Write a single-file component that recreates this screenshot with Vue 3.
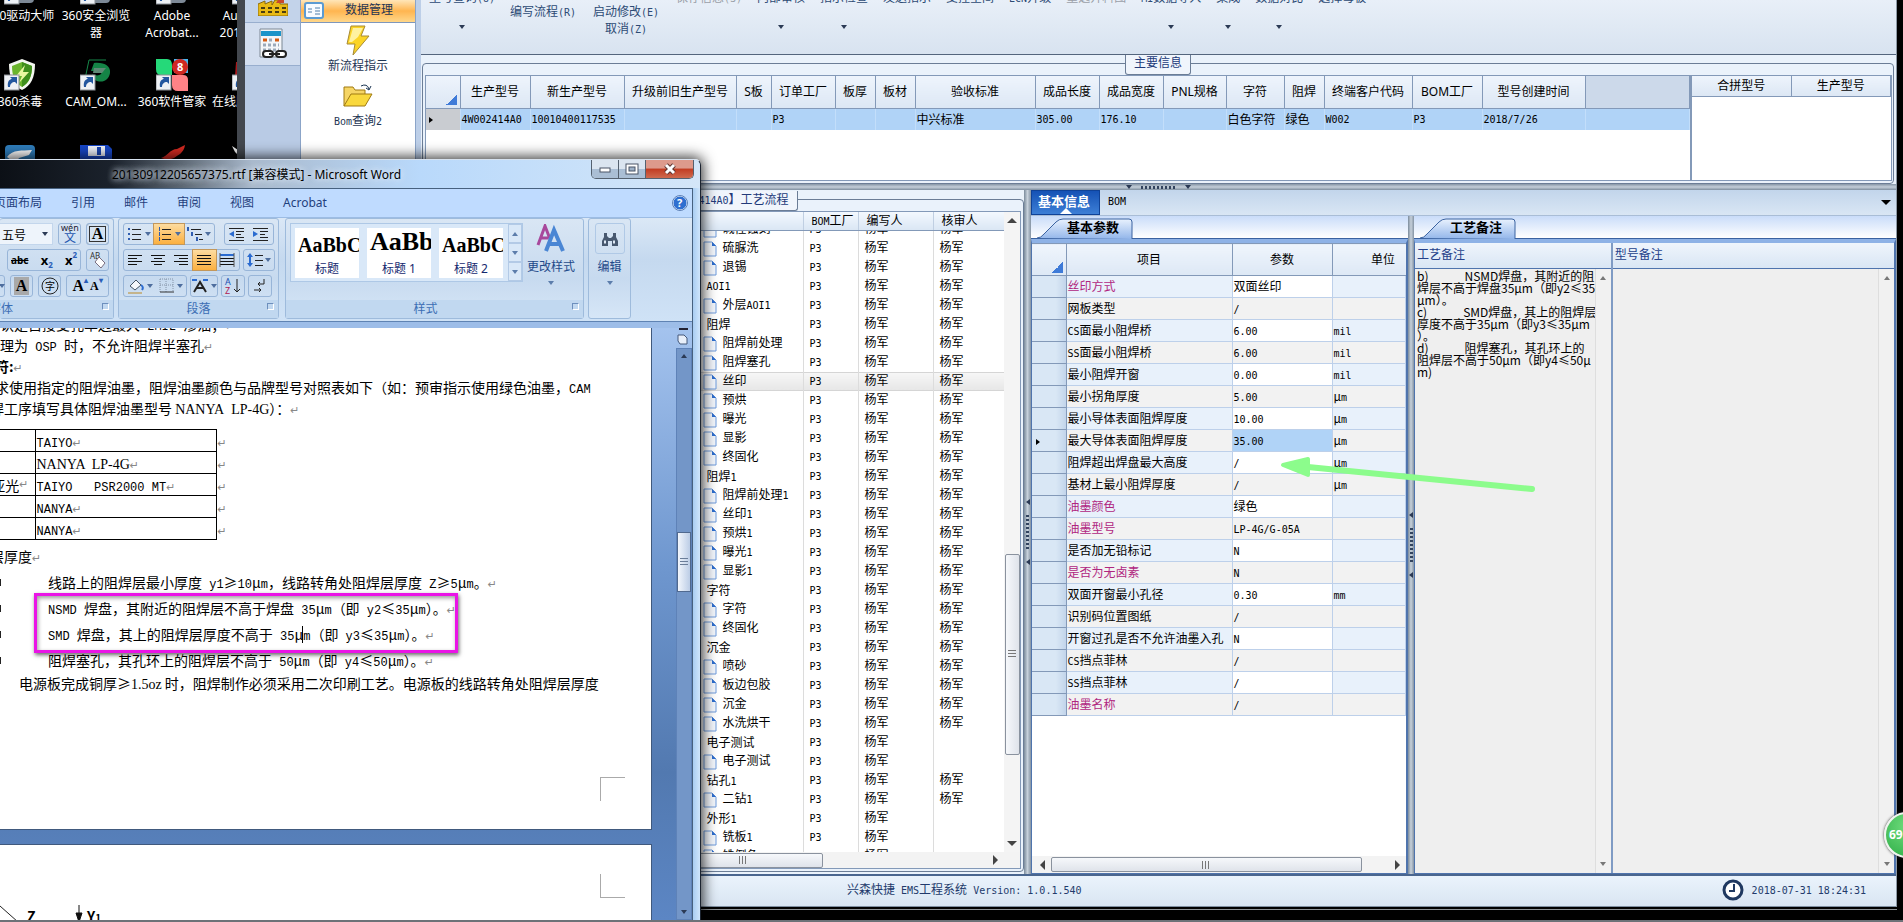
<script setup>
import { h, ref } from "vue";

// latin runs get the half width face, everything else stays full width
const Mixed = (props) =>
  props.text
    .split(/([ -~]+)/)
    .filter(Boolean)
    .map((s) => h("span", { class: /^[ -~]/.test(s) ? "hw" : "fw" }, s));
Mixed.props = ["text"];

const desktopIcons = [
  { kind: "drive", label: "360驱动大师" },
  { kind: "drive", label: "360安全浏览器" },
  { kind: "drive", label: "Adobe Acrobat..." },
  { kind: "drive", label: "AutoCAD 2010 - Si..." },
  { kind: "shield", label: "360杀毒" },
  { kind: "cam", label: "CAM_OM..." },
  { kind: "soft", label: "360软件管家" },
  { kind: "red", label: "在线服务系统" },
  { kind: "plane", label: "" },
  { kind: "disk", label: "" },
  { kind: "swift", label: "" },
  { kind: "white", label: "" },
];

const commands = [
  { lines: ["型号查询(U)"], arrow: true, wide: true },
  { lines: ["", "编写流程(R)"], wide: true, gap: true },
  { lines: ["", "启动修改(E)", "取消(Z)"], wide: true, gap: true },
  { lines: ["保存信息(S)"], off: true, wide: true },
  { lines: ["内部审核"], arrow: true },
  { lines: ["指示检查"], arrow: true },
  { lines: ["发送指示"] },
  { lines: ["受控空间"] },
  { lines: ["ECN升级"] },
  { lines: ["重选开料图"], off: true },
  { lines: ["MI数据导入"], arrow: true },
  { lines: ["集成"], arrow: true },
  { lines: ["数据对比"], arrow: true },
  { lines: ["选择母板"] },
];

const mainCols = [
  { t: "生产型号", v: "4W002414A0", w: 70 },
  { t: "新生产型号", v: "10010400117535", w: 94 },
  { t: "升级前旧生产型号", v: "", w: 112 },
  { t: "S板", v: "", w: 35 },
  { t: "订单工厂", v: "P3", w: 64 },
  { t: "板厚", v: "", w: 40 },
  { t: "板材", v: "", w: 40 },
  { t: "验收标准", v: "中兴标准", w: 120 },
  { t: "成品长度", v: "305.00", w: 64 },
  { t: "成品宽度", v: "176.10", w: 64 },
  { t: "PNL规格", v: "", w: 63 },
  { t: "字符", v: "白色字符", w: 58 },
  { t: "阻焊", v: "绿色", w: 40 },
  { t: "终端客户代码", v: "W002", w: 88 },
  { t: "BOM工厂", v: "P3", w: 70 },
  { t: "型号创建时间", v: "2018/7/26", w: 103 },
];

// names starting with # are the group rows
const steps = (
  "碱性蚀刻 硫脲洗 退锡 #AOI1 外层AOI1 #阻焊 阻焊前处理 阻焊塞孔 丝印 预烘 曝光 显影 终固化 " +
  "#阻焊1 阻焊前处理1 丝印1 预烘1 曝光1 显影1 #字符 字符 终固化 #沉金 喷砂 板边包胶 沉金 水洗烘干 " +
  "#电子测试 电子测试 #钻孔1 二钻1 #外形1 铣板1 铣倒角1"
)
  .split(" ")
  .map((s, i) => ({
    id: i,
    group: s[0] === "#",
    name: s.replace("#", ""),
    checker: [27, 28, 31, 32, 33].includes(i) ? "" : "杨军",
  }));
const activeStep = ref(8);

const params = [
  ["丝印方式", "双面丝印", "", 1],
  ["网板类型", "/", ""],
  ["CS面最小阻焊桥", "6.00", "mil"],
  ["SS面最小阻焊桥", "6.00", "mil"],
  ["最小阻焊开窗", "0.00", "mil"],
  ["最小拐角厚度", "5.00", "μm"],
  ["最小导体表面阻焊厚度", "10.00", "μm"],
  ["最大导体表面阻焊厚度", "35.00", "μm"],
  ["阻焊超出焊盘最大高度", "/", "μm"],
  ["基材上最小阻焊厚度", "/", "μm"],
  ["油墨颜色", "绿色", "", 1],
  ["油墨型号", "LP-4G/G-05A", "", 1],
  ["是否加无铅标记", "N", ""],
  ["是否为无卤素", "N", "", 1],
  ["双面开窗最小孔径", "0.30", "mm"],
  ["识别码位置图纸", "/", ""],
  ["开窗过孔是否不允许油墨入孔", "N", ""],
  ["CS挡点菲林", "/", ""],
  ["SS挡点菲林", "/", ""],
  ["油墨名称", "/", "", 1],
];
const activeParam = ref(7);

const remark = ref(
  [
    "b)　　　NSMD焊盘，其附近的阻",
    "焊层不高于焊盘35μm（即y2≤35",
    "μm）。",
    "c)　　　SMD焊盘，其上的阻焊层",
    "厚度不高于35μm（即y3≤35μm",
    "）。",
    "d)　　　阻焊塞孔，其孔环上的",
    "阻焊层不高于50μm（即y4≤50μ",
    "m)",
  ].join("\n")
);
const modelRemark = ref("");

const bullets = [
  "线路上的阻焊层最小厚度 y1≥10μm，线路转角处阻焊层厚度 Z≥5μm。",
  "NSMD 焊盘，其附近的阻焊层不高于焊盘 35μm（即 y2≤35μm）。",
  "SMD 焊盘，其上的阻焊层厚度不高于 35μm（即 y3≤35μm）。",
  "阻焊塞孔，其孔环上的阻焊层不高于 50μm（即 y4≤50μm）。",
];
const inks = [
  ["", "TAIYO"],
  ["", "NANYA  LP-4G"],
  ["亚光", "TAIYO   PSR2000 MT"],
  ["", "NANYA"],
  ["", "NANYA"],
];
const wordTabs = ["页面布局", "引用", "邮件", "审阅", "视图", "Acrobat"];
const styleCards = [
  { s: "AaBbC", t: "标题" },
  { s: "AaBb", t: "标题 1", big: true },
  { s: "AaBbC", t: "标题 2" },
];
</script>

<template>
  <main class="desktop">
    <ul class="shortcuts">
      <li v-for="(d, i) in desktopIcons" :key="i">
        <svg width="32" height="32" viewBox="0 0 32 32">
          <g v-if="d.kind === 'drive'">
            <rect x="2" y="2" width="28" height="28" rx="4" fill="#7d8996" />
          </g>
          <g v-else-if="d.kind === 'shield'">
            <path d="M18 0 L31 5 C31 18 27 27 18 31 C9 27 5 18 5 5 Z" fill="#f4f7f0" />
            <path d="M18 3 L28 7 C28 17 25 24 18 28 C11 24 8 17 8 7 Z" fill="#6ab52c" />
            <path d="M18 3 L28 7 C28 17 25 24 18 28 Z" fill="#3f8f1c" />
            <path d="M21 6 L12 17 h6 L15 24 L25 13 h-6 Z" fill="#e9f8a0" />
          </g>
          <g v-else-if="d.kind === 'cam'">
            <path d="M26 1 H9 L5 20" fill="none" stroke="#17884a" stroke-width="1" />
            <path d="M14 4 C24 3 31 7 30 14 C29 21 22 25 15 21 L12 15 C18 18 22 16 22 12 H11 Z" fill="#148446" />
            <path d="M14 9 h12 l-4 5 h-9 z" fill="#5f8a76" />
          </g>
          <g v-else-if="d.kind === 'soft'">
            <path d="M0 0 H11 Q16 0 16 6 V16 H5 Q0 16 0 10 Z" fill="#25d979" />
            <path d="M18 0 h14 v14 h-14z" fill="#49b8f0" />
            <path d="M16 16 H27 Q32 16 32 21 V32 H22 Q16 32 16 26 Z" fill="#ff8286" />
            <circle cx="24" cy="8" r="8" fill="#cf2822" />
            <text x="21" y="12" font-size="11" font-weight="bold" fill="#fff">8</text>
          </g>
          <g v-else-if="d.kind === 'plane'">
            <rect x="1" width="30" height="30" rx="4" fill="#2f7dbb" />
            <path d="M3 12 C9 4 18 6 28 5 L25 10 L15 13 L13 16 L7 15 Z" fill="#fff" />
          </g>
          <g v-else-if="d.kind === 'disk'">
            <path d="M0 0 H28 L32 4 V32 H0 Z" fill="#1747c8" />
            <rect x="8" y="1" width="17" height="10" fill="#eef2fb" />
            <rect x="17" y="2" width="4" height="8" fill="#1b47b4" />
            <rect x="5" y="16" width="22" height="16" fill="#dbe3f4" />
          </g>
          <g v-else-if="d.kind === 'swift'">
            <path d="M29 0 L21 4 C14 4 12 11 5 13 L12 15 L18 13 C22 10 28 8 29 0 Z" fill="#d52b22" />
            <path d="M16 20 q6 -8 8 0 v10 h-8z" fill="#b9201a" />
          </g>
          <g v-else-if="d.kind === 'white'">
            <path d="M0 1 L6 5 V10 L3 7 Z" fill="#eee" />
          </g>
          <g v-else>
            <path d="M4 3 h28 v28 h-30 z" fill="#a8181c" />
          </g>
          <g v-if="!['swift', 'white'].includes(d.kind)">
            <rect x="0" y="16" width="15" height="15" fill="#eef1f5" stroke="#8b9096" />
            <path d="M4 28 C3 22 6 20 8 20 L6 18 H13 V25 L11 23 C8 23 6 25 6 28 Z" fill="#23579f" />
          </g>
        </svg>
        <span>{{ d.label }}</span>
      </li>
    </ul>

    <!-- EMS -->
    <section class="ems">
      <div class="ems-main">
        <aside class="rail">
          <button class="rail-first" aria-label="工厂">
            <svg width="30" height="16" viewBox="0 0 30 16">
              <path d="M0 16 V4 L7 1 V4 L14 1 V5 L17 0 H22 V4 H30 V16 Z" fill="#e9ba14" stroke="#8a6a0c" />
              <path d="M3 8 h4 M10 8 h4 M17 8 h4 M24 8 h4 M3 12 h4 M10 12 h4 M17 12 h4 M24 12 h4" stroke="#4b3d10" stroke-width="2" />
              <path d="M18 3 l2 -3 h6 v3z" fill="#c9482c" />
            </svg>
          </button>
          <button aria-label="日程">
            <svg width="30" height="32" viewBox="0 0 30 32">
              <path d="M2 1 h22 v28 h-22z" fill="#f4f6f9" stroke="#7c8894" />
              <path d="M3 3 h20 v5 h-20z" fill="#1c94c9" />
              <path d="M5 12 h4 M17 12 h4" stroke="#d55b12" stroke-width="3" />
              <path d="M11 12 h4 M5 17 h16 M5 22 h16" stroke="#9ba9ba" stroke-width="3" stroke-dasharray="3 2" />
              <rect x="5" y="23" width="10" height="6" rx="3" fill="#fff" stroke="#222" stroke-width="2" />
              <rect x="18" y="23" width="10" height="6" rx="3" fill="#fff" stroke="#222" stroke-width="2" />
              <path d="M11 26 h11" stroke="#222" stroke-width="2" />
            </svg>
          </button>
        </aside>

        <nav class="nav">
          <h2>
            <svg width="20" height="17" viewBox="0 0 20 17">
              <rect x="1" y="1" width="18" height="15" rx="2" fill="#f7fbff" stroke="#5c9bd2" stroke-width="2" />
              <path d="M4 7 h4 M4 10 h4 M11 6 h5 M11 9 h5 M11 12 h5" stroke="#4f7fab" />
            </svg>
            <span>数据管理</span>
          </h2>
          <a href="#">
            <svg width="24" height="32" viewBox="0 0 24 32">
              <path d="M5 1 H19 L15 11 H23 L7 30 L9 19 H1 Z" fill="#fcd425" stroke="#a68a36" />
              <path d="M7 3 H17 L12 12 L6 17 H3 Z" fill="#fff2a0" />
            </svg>
            <Mixed text="新流程指示" />
          </a>
          <a href="#" class="second">
            <svg width="30" height="24" viewBox="0 0 30 24">
              <path d="M1 22 V3 H10 L12 6 H22 V10" fill="#f6d565" stroke="#a07b13" />
              <path d="M1 22 L8 10 H29 L22 22 Z" fill="#f9d83d" stroke="#a07b13" />
              <path d="M18 2 q6 -3 8 3 m-3 -1 l3 2 l2 -4" fill="none" stroke="#17324f" />
            </svg>
            <span><Mixed text="Bom查询2" /></span>
          </a>
        </nav>

        <div class="work">
          <div class="ribbon">
            <button v-for="(c, i) in commands" :key="i" :class="{ off: c.off, gap: c.gap, wide: c.wide }">
              <span v-for="(l, k) in c.lines" :key="k" class="cmd-line"><Mixed :text="l" /></span>
              <i v-if="c.arrow" class="tri down"></i>
            </button>
          </div>

          <div class="group main-info">
            <h3 class="caption">主要信息</h3>
            <div class="grids">
              <div class="grid-wrap">
                <table class="main-table">
                  <thead>
                    <tr>
                      <th class="rowhead"><i class="corner"></i></th>
                      <th v-for="c in mainCols" :key="c.t" :style="{ width: c.w + 'px' }">{{ c.t }}</th>
                      <th class="rest"></th>
                    </tr>
                  </thead>
                  <tbody>
                    <tr>
                      <td class="rowhead"><i class="tri right"></i></td>
                      <td v-for="c in mainCols" :key="c.t"><Mixed :text="c.v" /></td>
                      <td></td>
                    </tr>
                  </tbody>
                </table>
              </div>
              <table class="panel-table">
                <thead>
                  <tr>
                    <th>合拼型号</th>
                    <th>生产型号</th>
                  </tr>
                </thead>
              </table>
            </div>
          </div>

          <div class="hsplit"><i class="tri down"></i><i class="dots"></i><i class="tri down"></i></div>

          <div class="lower">
            <div class="process">
              <div class="group">
                <h3 class="caption left"><Mixed text="【4W002414A0】工艺流程" /></h3>
                <div class="tree">
                  <div class="tree-cols">
                    <table class="tree-head">
                      <thead>
                        <tr>
                          <th></th>
                          <th class="c-name"></th>
                          <th class="c-bom"><Mixed text="BOM工厂" /></th>
                          <th class="c-writer">编写人</th>
                          <th class="c-check">核审人</th>
                        </tr>
                      </thead>
                    </table>
                    <div class="tree-body">
                      <table>
                        <tbody>
                          <tr v-for="s in steps" :key="s.id" :class="{ on: s.id === activeStep }" @click="activeStep = s.id">
                            <td></td>
                            <td class="c-name" :class="{ parent: s.group }">
                              <svg v-if="!s.group" width="14" height="16" viewBox="0 0 14 16">
                                <path d="M1 1 H9 L13 5 V15 H1 Z" fill="#f3f7fd" stroke="#6f9bdc" />
                                <path d="M9 1 V5 H13 Z" fill="#2e6fd0" />
                              </svg>
                              <Mixed :text="s.name" />
                            </td>
                            <td class="c-bom"><Mixed text="P3" /></td>
                            <td class="c-writer">杨军</td>
                            <td class="c-check">{{ s.checker }}</td>
                          </tr>
                        </tbody>
                      </table>
                    </div>
                  </div>
                  <div class="vbar"><i class="tri up"></i><b></b><i class="tri down"></i></div>
                </div>
                <div class="hbar process-h"><b></b><i class="tri right"></i></div>
              </div>
            </div>

            <div class="vsplit"><i class="tri lft"></i><i class="dots"></i><i class="tri lft"></i></div>

            <div class="detail">
              <div class="tabbar">
                <button class="active">基本信息<i></i></button>
                <button><Mixed text="BOM" /></button>
                <i class="tri down"></i>
              </div>
              <div class="panes">
                <div class="pane params">
                  <div class="strip">
                    <button>
                      <svg width="96" height="21" viewBox="0 0 96 21">
                        <defs>
                          <linearGradient id="tabfill" x1="0" y1="0" x2="0" y2="1">
                            <stop offset="0" stop-color="#e9f2fe" />
                            <stop offset="1" stop-color="#93b6ea" />
                          </linearGradient>
                        </defs>
                        <path d="M0 20 Q4 20 7 16 L19 4 Q22 1 26 1 H92 Q95 1 95 4 V21" fill="url(#tabfill)" stroke="#3a62a0" />
                      </svg>
                      <span>基本参数</span>
                    </button>
                  </div>
                  <div class="pane-body">
                    <table class="param-table">
                      <thead>
                        <tr>
                          <th class="rowhead"><i class="corner"></i></th>
                          <th class="p-item">项目</th>
                          <th class="p-value">参数</th>
                          <th class="p-unit">单位</th>
                        </tr>
                      </thead>
                      <tbody>
                        <tr v-for="(p, i) in params" :key="p[0]" @click="activeParam = i">
                          <td class="rowhead"><i v-if="i === activeParam" class="tri right"></i></td>
                          <td :class="{ must: p[3] }"><Mixed :text="p[0]" /></td>
                          <td class="val" :class="{ sel: i === activeParam }"><Mixed :text="p[1]" /></td>
                          <td><Mixed :text="p[2]" /></td>
                        </tr>
                      </tbody>
                    </table>
                    <div class="hbar"><i class="tri lft"></i><b></b><i class="tri right"></i></div>
                  </div>
                </div>

                <div class="vsplit slim"><i class="tri lft"></i><i class="dots"></i><i class="tri lft"></i></div>

                <div class="pane remarks">
                  <div class="strip">
                    <button>
                      <svg width="96" height="21" viewBox="0 0 96 21">
                        <path d="M0 20 Q4 20 7 16 L19 4 Q22 1 26 1 H92 Q95 1 95 4 V21" fill="url(#tabfill)" stroke="#3a62a0" />
                      </svg>
                      <span>工艺备注</span>
                    </button>
                  </div>
                  <div class="pane-body notes">
                    <div class="note craft">
                      <label for="craft">工艺备注</label>
                      <div class="note-box">
                        <textarea id="craft" v-model="remark" readonly></textarea>
                        <div class="mini"><i class="tri up"></i><i class="tri down"></i></div>
                      </div>
                    </div>
                    <div class="note">
                      <label for="model">型号备注</label>
                      <div class="note-box">
                        <textarea id="model" v-model="modelRemark" readonly></textarea>
                        <div class="mini"><i class="tri up"></i><i class="tri down"></i></div>
                      </div>
                    </div>
                  </div>
                </div>
              </div>
            </div>
          </div>
        </div>
      </div>
      <footer class="status">
        <span class="ver"><Mixed text="兴森快捷 EMS工程系统 Version: 1.0.1.540" /></span>
        <svg width="22" height="22" viewBox="0 0 22 22">
          <circle cx="11" cy="11" r="9" fill="#fff" stroke="#1f3860" stroke-width="3" />
          <path d="M12 5 V12 H7" fill="none" stroke="#1f3860" stroke-width="2" />
        </svg>
        <time><Mixed text="2018-07-31 18:24:31" /></time>
      </footer>
    </section>

    <!-- Word -->
    <section class="word">
      <header class="title">
        <h1>20130912205657375.rtf [兼容模式] - Microsoft Word</h1>
        <div class="winbtns">
          <button aria-label="最小化"><svg width="12" height="12"><rect x="1" y="5" width="10" height="4" fill="#fff" stroke="#4a5566" /></svg></button>
          <button aria-label="最大化"><svg width="14" height="12"><rect x="1" y="1" width="12" height="10" fill="#fff" stroke="#4a5566" /><rect x="4" y="4" width="6" height="4" fill="#9db0c6" stroke="#4a5566" /></svg></button>
          <button class="close" aria-label="关闭"><svg width="14" height="12"><path d="M3 2 L11 10 M11 2 L3 10" stroke="#5d3431" stroke-width="5" /><path d="M3 2 L11 10 M11 2 L3 10" stroke="#fff" stroke-width="3" /></svg></button>
        </div>
      </header>

      <div class="word-in">
        <nav class="wtabs">
          <button v-for="t in wordTabs" :key="t">{{ t }}</button>
          <svg class="help" width="16" height="16" viewBox="0 0 16 16">
            <circle cx="8" cy="8" r="7" fill="#2f6fd0" stroke="#e8f1ff" />
            <circle cx="8" cy="8" r="7.5" fill="none" stroke="#5b7fb5" />
            <text x="5" y="12" font-size="11" font-weight="bold" fill="#fff">?</text>
          </svg>
        </nav>

        <div class="wribbon">
          <div class="wgroup font">
            <div class="tools">
              <div class="trow">
                <span class="size"><select aria-label="字号"><option>五号</option></select><i class="tri down"></i></span>
                <button class="box"><svg width="20" height="20" viewBox="0 0 20 20"><text x="1" y="7" font-size="9" fill="#223">wén</text><text x="4" y="18" font-size="12" fill="#2456b0">文</text></svg></button>
                <button class="box letter framed">A</button>
              </div>
              <div class="trow">
                <span class="seg script"><button><s>abc</s></button><button>x<sub>2</sub></button><button>x<sup>2</sup></button></span>
                <button class="box">
                  <svg width="18" height="18"><text x="1" y="8" font-size="8" fill="#333">AB</text><path d="M6 11 L10 6 L16 12 L12 17 Z" fill="#fff" stroke="#7a6f80" /></svg>
                </button>
              </div>
              <div class="trow">
                <span class="seg tiny"><i class="tri down"></i></span>
                <button class="box letter shade"><span>A</span></button>
                <button class="box"><svg width="20" height="18"><circle cx="10" cy="9" r="8" fill="none" stroke="#222" /><text x="5" y="13" font-size="10">字</text></svg></button>
                <span class="seg grow"><button>A<sup>▴</sup></button><button class="sm">A<sup>▾</sup></button></span>
              </div>
            </div>
            <footer><span>字体</span><i class="launch"></i></footer>
          </div>

          <div class="wgroup para">
            <div class="tools">
              <div class="trow">
                <span class="seg">
                  <button><svg width="16" height="16"><path d="M1 3 h2 M1 8 h2 M1 13 h2" stroke="#2f5db0" stroke-width="2" /><path d="M5 3.5 h9 M5 8.5 h9 M5 13.5 h9" stroke="#222" /></svg><i class="tri down"></i></button>
                  <button class="hot"><svg width="16" height="16"><path d="M2.5 1 v4 M2.5 6 v4 M2.5 11 v4" stroke="#2f5db0" /><path d="M5 3.5 h9 M5 8.5 h9 M5 13.5 h9" stroke="#222" /></svg><i class="tri down"></i></button>
                  <button><svg width="16" height="16"><path d="M1 1 v4 M5 6 v4 M10 11 v4" stroke="#2f5db0" stroke-width="2" /><path d="M4 3.5 h10 M8 8.5 h7 M12 13.5 h4" stroke="#222" /></svg><i class="tri down"></i></button>
                </span>
                <span class="seg push">
                  <button><svg width="18" height="16"><path d="M1 2.5 h15 M8 5.5 h8 M8 8.5 h5 M8 11.5 h8 M1 14.5 h15" stroke="#222" /><path d="M6 5 L1 8 L6 11z" fill="#2b6bd0" /></svg></button>
                  <button><svg width="18" height="16"><path d="M1 2.5 h15 M8 5.5 h8 M8 8.5 h5 M8 11.5 h8 M1 14.5 h15" stroke="#222" /><path d="M1 5 L6 8 L1 11z" fill="#2b6bd0" /></svg></button>
                </span>
              </div>
              <div class="trow">
                <span class="seg align">
                  <button><svg width="16" height="14"><path d="M1 2.5 h14 M1 5.5 h9 M1 8.5 h14 M1 11.5 h9" stroke="#111" /></svg></button>
                  <button><svg width="16" height="14"><path d="M1 2.5 h14 M4 5.5 h8 M1 8.5 h14 M4 11.5 h8" stroke="#111" /></svg></button>
                  <button><svg width="16" height="14"><path d="M1 2.5 h14 M6 5.5 h9 M1 8.5 h14 M6 11.5 h9" stroke="#111" /></svg></button>
                  <button class="hot"><svg width="16" height="14"><path d="M1 2.5 h14 M1 5.5 h14 M1 8.5 h14 M1 11.5 h14" stroke="#111" /></svg></button>
                  <button><svg width="16" height="14"><path d="M1 5.5 h14 M1 8.5 h14 M1 11.5 h14" stroke="#111" /><path d="M1 2 h14" stroke="#2b6bd0" stroke-width="2" /><path d="M1 0 v14 M15 0 v14" stroke="#555" /></svg></button>
                </span>
                <button class="box lines"><svg width="16" height="16"><path d="M3 1 L6 5 H0z M3 15 L6 11 H0z M2 5 h2 v6 h-2z" fill="#2b6bd0" /><path d="M8 3.5 h8 M8 8.5 h8 M8 13.5 h8" stroke="#222" /></svg><i class="tri down"></i></button>
              </div>
              <div class="trow">
                <span class="seg">
                  <button><svg width="18" height="16"><path d="M3 8 L9 2 L14 7 L8 12z" fill="#f5f8fc" stroke="#456" /><path d="M14 7 q3 2 1 5" stroke="#2b6bd0" fill="none" stroke-width="2" /><path d="M1 15 h14" stroke="#c4b48c" stroke-width="2" /></svg><i class="tri down"></i></button>
                  <button><svg width="16" height="16"><path d="M1 1 h13 v13 M1 1 v13 M7 1 v13 M1 7 h13" fill="none" stroke="#8494a8" stroke-dasharray="1 1" /><path d="M1 14 h14" stroke="#333" /></svg><i class="tri down"></i></button>
                </span>
                <button class="box"><svg width="18" height="16"><path d="M3 14 L9 4 L15 14 M6 10 h6" fill="none" stroke="#222" stroke-width="2" /><path d="M1 2 h5 M12 2 h5" stroke="#2b6bd0" stroke-width="2" /></svg><i class="tri down"></i></button>
                <button class="box square"><svg width="18" height="18"><text x="1" y="8" font-size="9" fill="#2050b0">A</text><text x="1" y="17" font-size="9" fill="#b02050">Z</text><path d="M13 2 v13 M10 12 l3 3 l3 -3" fill="none" stroke="#222" /></svg></button>
                <button class="box square"><svg width="16" height="16"><path d="M12 1 v5 h-6 M8 4 l-2 2 l2 2 M2 12 h7 M7 10 l2 2 l-2 2" fill="none" stroke="#222" /></svg></button>
              </div>
            </div>
            <footer>段落<i class="launch"></i></footer>
          </div>

          <div class="wgroup styles">
            <div class="tools across">
              <div class="gallery">
                <button v-for="c in styleCards" :key="c.t" class="card"><b :class="{ big: c.big }">{{ c.s }}</b><span>{{ c.t }}</span></button>
                <div class="gscroll"><span><i class="tri up"></i></span><span><i class="tri down"></i></span><span><i class="tri down"></i></span></div>
              </div>
              <button class="change">
                <svg width="30" height="30" viewBox="0 0 30 30">
                  <path d="M2 21 L9 2 L14 15 M4 14 h8" fill="none" stroke="#a8489c" stroke-width="3" />
                  <path d="M10 27 L18 6 L27 27 M13 20 h10" fill="none" stroke="#4a86d4" stroke-width="4" />
                </svg>
                <span>更改样式</span><i class="tri down"></i>
              </button>
            </div>
            <footer>样式<i class="launch"></i></footer>
          </div>

          <div class="wgroup edit">
            <button>
              <span class="bino"><svg width="16" height="16" viewBox="0 0 16 16"><path d="M2 2 h3 v3 l2 2 h2 l2 -2 v-3 h3 v4 l2 4 v5 h-6 v-5 h-4 v5 h-6 v-5 l2 -4z" fill="#47586f" /><path d="M2 11 h2 M11 11 h2" stroke="#dfe9f5" stroke-width="3" /></svg></span>
              <span>编辑</span><i class="tri down"></i>
            </button>
          </div>
        </div>
        <div class="edge"></div>

        <div class="doc">
          <div class="sheets">
            <article class="sheet">
              <p><Mixed text="认是自接受孔单边最大 2MIL 渗油；" /><i class="ret">↵</i></p>
              <p><Mixed text="理为 OSP 时，不允许阻焊半塞孔" /><i class="ret">↵</i></p>
              <p class="cut"><strong>符:</strong><i class="ret">↵</i></p>
              <p class="cut"><Mixed text="求使用指定的阻焊油墨，阻焊油墨颜色与品牌型号对照表如下（如：预审指示使用绿色油墨，CAM" /></p>
              <p class="cut more">焊工序填写具体阻焊油墨型号 <span class="roman">NANYA&nbsp; LP-4G</span>）：<i class="ret">↵</i></p>
              <table class="inks">
                <tbody>
                  <tr v-for="(r, i) in inks" :key="i">
                    <td class="color"><div v-if="r[0]"><span>{{ r[0] }}</span><i class="ret">↵</i></div></td>
                    <td class="brand"><span v-if="i === 1" class="roman">{{ r[1] }}</span><Mixed v-else :text="r[1]" /><i class="ret">↵</i></td>
                    <td class="end"><i class="ret">↵</i></td>
                  </tr>
                </tbody>
              </table>
              <p class="cut more sub">层厚度<i class="ret">↵</i></p>
              <ul>
                <li v-for="b in bullets" :key="b"><Mixed :text="b" /><i class="ret">↵</i></li>
              </ul>
              <p class="tail">电源板完成铜厚≥<span class="roman">1.5oz</span> 时，阻焊制作必须采用二次印刷工艺。电源板的线路转角处阻焊层厚度</p>
              <div class="marker"></div>
              <div class="cursor"></div>
              <div class="crop bottom"></div>
            </article>
            <article class="sheet next">
              <div class="crop top"></div>
              <svg width="110" height="24" viewBox="0 0 110 24">
                <path d="M0 4 L18 20" stroke="#222" />
                <path d="M79 3 V20 M76 11 L79 20 L82 11 Z" stroke="#111" fill="#111" />
                <text x="27" y="20" font-size="14" font-weight="bold">Z</text>
                <text x="87" y="20" font-size="14" font-weight="bold">Y<tspan font-size="10">1</tspan></text>
              </svg>
            </article>
          </div>
          <div class="wscroll">
            <svg width="14" height="20" viewBox="0 0 14 20">
              <path d="M3 1 h9" stroke="#223" stroke-width="2" />
              <path d="M2 7 h6 l3 3 v6 h-7 l-2 -3z" fill="#e8effa" stroke="#44587a" />
            </svg>
            <div class="track"><i class="tri up"></i><b></b><i class="tri down"></i></div>
          </div>
        </div>
      </div>
    </section>

    <svg class="pointer" width="260" height="40" viewBox="0 0 260 40">
      <path d="M28 12 L252 34" stroke="#8cfc8c" stroke-width="6" stroke-linecap="round" />
      <path d="M3 10 L28 4 V20 Z" fill="#8cfc8c" stroke="#8cfc8c" stroke-width="4" stroke-linejoin="round" />
    </svg>
    <button class="ball">69</button>
    <div class="taskbar"></div>
  </main>
</template>

<style>
body {
  background: #000;
  overflow: hidden;
}
</style>

<style scoped>
* {
  box-sizing: border-box;
}

.desktop {
  position: relative;
  height: 100vh;
  overflow: hidden;
  background: #000;
  font-family: "Noto Sans", "Noto Sans CJK SC", sans-serif;
  font-size: 12px;
  line-height: 16px;
}

button {
  font: inherit;
  color: inherit;
  background: none;
  border: none;
  padding: 0;
  cursor: pointer;
}

h1, h2, h3, ul, p {
  margin: 0;
  padding: 0;
  font-size: inherit;
  font-weight: normal;
}

li {
  list-style: none;
}

svg {
  display: block;
  flex: none;
}

table {
  border-collapse: collapse;
  table-layout: fixed;
  width: 100%;
}

th {
  font-weight: normal;
}

:deep(.hw) {
  font-family: "DejaVu Sans Mono", monospace;
  font-size: 10px;
  line-height: 1;
  white-space: pre;
}

:deep(.fw) {
  font-family: "Noto Sans CJK SC", sans-serif;
}

.tri {
  display: inline-block;
  flex: none;
  width: 0;
  height: 0;
  border: 3px solid transparent;
  color: #2b3a55;
}

.tri.down {
  border-top: 4px solid;
  border-bottom: 0;
}

.tri.up {
  border-bottom: 4px solid;
  border-top: 0;
}

.tri.right {
  border-left: 4px solid;
  border-right: 0;
}

.tri.lft {
  border-right: 4px solid;
  border-left: 0;
}

/* desktop icons */
.shortcuts {
  position: absolute;
  top: -27px;
  left: -18px;
  display: grid;
  grid-template-columns: repeat(4, 76px);
  grid-auto-rows: 86px;
  color: #fff;
  line-height: 17px;
  text-align: center;
}

.shortcuts li {
  display: flex;
  flex-direction: column;
  align-items: center;
  gap: 2px;
}

.shortcuts span {
  width: 72px;
  word-break: break-word;
}

/* EMS window */
.ems {
  position: absolute;
  top: 0;
  left: 237px;
  right: 6px;
  bottom: 15px;
  display: flex;
  flex-direction: column;
  background: #bdcfe8;
  border-left: 8px solid #43484f;
  border-right: 1px solid #8d99a6;
  box-shadow: inset 1px 0 #dfe3e8, 0 2px #000, 0 3px #8d9296;
}

.ems-main {
  flex: 1;
  display: flex;
  min-height: 0;
}

.rail {
  width: 55px;
  background: #b9cbe5;
}

.rail button {
  display: flex;
  justify-content: center;
  width: 100%;
  height: 43px;
  padding-top: 5px;
  background: #d3deef;
  border-bottom: 1px solid #98aece;
}

.rail .rail-first {
  height: 23px;
  padding-top: 0;
  background: #c3d3ea;
}

.nav {
  width: 116px;
  background: #fff;
  border-left: 1px solid #8ba4c8;
  border-right: 1px solid #8ba4c8;
  color: #1e3553;
}

.nav h2 {
  display: flex;
  align-items: center;
  height: 23px;
  padding: 0 22px 2px 3px;
  background: linear-gradient(#ffe6b8, #ffb550 50%, #ffd78a);
  border-bottom: 1px solid #7e97bc;
}

.nav h2 span {
  margin-left: auto;
}

.nav a {
  display: flex;
  flex-direction: column;
  align-items: center;
  padding-top: 2px;
  color: inherit;
  text-decoration: none;
}

.nav .second {
  padding-top: 11px;
  gap: 4px;
}

.work {
  flex: 1;
  min-width: 0;
  display: flex;
  flex-direction: column;
  margin-left: 5px;
  background: #eaf2fb;
}

.ribbon {
  display: flex;
  gap: 15px;
  height: 55px;
  flex: none;
  padding-left: 8px;
  overflow: hidden;
  color: #2c4a74;
  background: linear-gradient(#e8eff8, #d8e3f0);
  border-bottom: 1px solid #54657d;
}

.ribbon button {
  display: flex;
  flex: none;
  flex-direction: column;
  align-items: center;
  margin-top: -11px;
}

.ribbon .wide {
  width: 66px;
}

.ribbon .gap {
  margin-top: -14px;
  margin-right: 2px;
}

.ribbon .off {
  color: #9a9fa8;
}

.ribbon .tri {
  margin-top: 19px;
}

.cmd-line {
  height: 17px;
  white-space: nowrap;
}

.group {
  position: relative;
  margin: 8px 2px 0 1px;
  padding: 11px 1px 2px 2px;
  border: 1px solid #6b7d96;
  border-radius: 4px;
}

.caption {
  position: absolute;
  left: 0;
  right: 0;
  top: -9px;
  width: fit-content;
  height: 20px;
  margin: 0 auto;
  padding: 0 8px;
  color: #223a7a;
  background: #f0f5fc;
  border: 1px solid #6b7d96;
  border-top: 0;
  border-radius: 0 0 3px 3px;
}

.grids {
  display: flex;
  height: 106px;
  background: #fff;
  border: 1px solid #8399b8;
}

.grid-wrap {
  flex: 1;
  min-width: 0;
  overflow: hidden;
  border-right: 2px solid #8399b8;
}

.main-table th, .main-table td, .panel-table th {
  padding: 0;
  overflow: hidden;
  white-space: nowrap;
}

.main-table th, .panel-table th {
  background: linear-gradient(#eef4fc, #dce7f4);
  border-right: 1px solid #8399b8;
  border-bottom: 1px solid #8399b8;
}

.main-table th {
  height: 32px;
}

.main-table .rest {
  background: #ccd9ea;
}

.main-table td {
  height: 22px;
  padding-left: 1px;
  background: #b0d3f7;
  border-right: 1px solid #c3defa;
}

.rowhead {
  width: 34px;
}

.main-table td.rowhead {
  padding-left: 3px;
  background: #c9ccd1;
}

.corner {
  display: block;
  width: 11px;
  height: 11px;
  margin: 16px 0 0 20px;
  background: linear-gradient(135deg, transparent 50%, #3f7bd8 50%);
}

.rowhead .tri {
  border-left-color: #000;
}

.panel-table {
  width: 199px;
  height: 21px;
}

.hsplit {
  display: flex;
  align-items: center;
  justify-content: center;
  gap: 9px;
  height: 6px;
  flex: none;
  background: linear-gradient(#8796a6, #c3ced9, #7f8f9f);
}

.hsplit .dots {
  width: 35px;
  height: 3px;
  background: repeating-linear-gradient(90deg, #33445f 0 2px, transparent 2px 4px);
}

.lower {
  flex: 1;
  display: flex;
  min-height: 0;
}

.process {
  flex: 603 1 0;
  min-width: 0;
  display: flex;
  background: #eaf2fb;
}

.process .group {
  flex: 1;
  min-width: 0;
  display: flex;
  flex-direction: column;
  margin: 9px 0 2px;
  padding: 11px 2px 2px;
}

.tree {
  flex: 1;
  display: flex;
  min-height: 0;
  background: #fff;
  border: 1px solid #8399b8;
  border-bottom: 0;
}

.tree-cols {
  flex: 1;
  display: flex;
  flex-direction: column;
  min-width: 0;
}

.tree-head th {
  height: 18px;
  padding: 0 0 0 8px;
  text-align: left;
  background: linear-gradient(#f3f8fe, #dae6f4);
  border-right: 1px solid #c0cfe2;
  border-bottom: 1px solid #8399b8;
}

.tree-body {
  flex: 1;
  overflow: hidden;
}

.tree-body table {
  margin-top: -11px;
}

.tree-body td {
  height: 19px;
  padding: 0 0 0 6px;
  line-height: 16px;
  border-right: 1px solid #dcdcdc;
  white-space: nowrap;
}

.tree-body td.c-name {
  padding-left: 9px;
}

.tree-body td.parent {
  padding-left: 13px;
}

.tree-body td svg {
  display: inline-block;
  margin-right: 6px;
  vertical-align: middle;
}

.tree-body .on td {
  background: linear-gradient(#f7f7f7, #e6e6e6);
  box-shadow: inset 0 1px #d5d5d5, inset 0 -1px #d5d5d5;
}

.c-name {
  width: 110px;
}

.c-bom {
  width: 55px;
}

.c-writer {
  width: 75px;
}

.c-check {
  width: 71px;
}

.tree-head .c-check, .tree-body .c-check {
  border-right: 0;
}

.vbar {
  display: flex;
  flex-direction: column;
  align-items: center;
  width: 16px;
  padding: 6px 0;
  background: #f4f4f4;
}

.vbar b {
  flex: none;
  width: 15px;
  height: 201px;
  margin: 331px 0 auto;
  background: repeating-linear-gradient(#777 0 1px, transparent 1px 3px) center / 8px 9px no-repeat, linear-gradient(90deg, #f6f8fb, #dfe3ea);
  border: 1px solid #8a929e;
  border-radius: 2px;
}

.vbar .tri, .hbar .tri {
  border-width: 5px;
  color: #444;
}

.vbar .up {
  border-top-width: 0;
}

.vbar .down {
  border-bottom-width: 0;
}

.hbar {
  display: flex;
  align-items: center;
  height: 17px;
  flex: none;
  padding: 0 6px;
  background: #f3f3f3;
}

.hbar b {
  height: 15px;
  background: repeating-linear-gradient(90deg, #777 0 1px, transparent 1px 3px) center / 9px 8px no-repeat, linear-gradient(#f6f8fb, #dfe3ea);
  border: 1px solid #8a929e;
  border-radius: 2px;
}

.hbar .right {
  border-right-width: 0;
  margin-left: auto;
}

.hbar .lft {
  border-left-width: 0;
}

.process-h {
  padding: 0 22px 0 238px;
  border: 1px solid #8399b8;
  border-top: 0;
}

.process-h b {
  width: 160px;
}

.vsplit {
  display: flex;
  flex-direction: column;
  align-items: center;
  justify-content: center;
  gap: 10px;
  width: 7px;
  background: linear-gradient(90deg, #7b8b9b, #c7d1db, #8493a3);
}

.vsplit.slim {
  width: 6px;
}

.vsplit .dots {
  width: 3px;
  height: 34px;
  background: repeating-linear-gradient(#33445f 0 2px, transparent 2px 4px);
}

.detail {
  flex: 865 1 0;
  min-width: 0;
  display: flex;
  flex-direction: column;
}

.tabbar {
  display: flex;
  align-items: center;
  height: 26px;
  flex: none;
  padding-right: 5px;
  background: linear-gradient(#c2d5eb, #d9e6f4);
  border-bottom: 1px solid #a9bdd6;
}

.tabbar button {
  height: 25px;
  padding: 0 8px 4px;
}

.tabbar .active {
  position: relative;
  width: 69px;
  padding: 0 3px 3px 0;
  color: #fff;
  font-size: 13px;
  font-weight: bold;
  background: linear-gradient(#1552b5, #3d7fd6);
  border: 1px solid #0f4297;
}

.tabbar .active i {
  position: absolute;
  left: 28px;
  bottom: 0;
  border: 6px solid transparent;
  border-top: 0;
  border-bottom-color: #fff;
}

.tabbar > .tri {
  margin-left: auto;
  border-width: 5px 5px 0;
  color: #000;
}

.panes {
  flex: 1;
  display: flex;
  min-height: 0;
}

.pane {
  flex: 377 1 0;
  min-width: 0;
  display: flex;
  flex-direction: column;
}

.remarks {
  flex: 482 1 0;
}

.strip {
  height: 23px;
  flex: none;
  padding: 2px 0 0 6px;
  background: linear-gradient(#c9dcf9, #fff);
  border-bottom: 1px solid #3a62a0;
}

.strip button {
  display: grid;
  font-size: 13px;
  line-height: 18px;
  font-weight: bold;
}

.strip button > * {
  grid-area: 1 / 1;
}

.strip button span {
  padding-left: 16px;
}

.pane-body {
  flex: 1;
  display: flex;
  flex-direction: column;
  min-height: 0;
  background: #fff;
  border: 1px solid #4f74ad;
  border-top: 4px solid #8eb2e6;
  border-right-width: 2px;
}

.param-table th {
  height: 32px;
  padding: 0;
  background: linear-gradient(#eff5fc, #dde8f5);
  border: 1px solid #8399b8;
  border-left: 0;
}

.p-item {
  width: 166px;
}

.p-value {
  width: 100px;
}

.param-table th.p-unit {
  padding-left: 28px;
  border-right: 0;
}

.param-table td {
  height: 22px;
  padding: 0 0 0 1px;
  background: #e8f1fb;
  border-right: 1px solid #bdd0ea;
  border-bottom: 1px solid #bdd0ea;
  white-space: nowrap;
  line-height: 16px;
}

.param-table .val {
  background: #fff;
}

.param-table tr:nth-child(even) td {
  background: #f2f2f2;
}

.param-table tr td.sel, .param-table tr:nth-child(even) td.sel {
  background: #b0d3f7;
}

.param-table tr td.rowhead, .param-table tr:nth-child(even) td.rowhead {
  padding-left: 4px;
  background: linear-gradient(90deg, #d9e7f5 70%, #c2d4ea);
  border-color: #8399b8;
}

.param-table td.must {
  color: #b0267f;
}

.pane-body > .hbar {
  margin-top: auto;
  gap: 6px;
  padding-left: 8px;
}

.pane-body > .hbar b {
  flex: none;
  width: 311px;
}

.notes {
  flex-direction: row;
}

.note {
  flex: 283 1 0;
  min-width: 0;
  display: flex;
  flex-direction: column;
}

.note.craft {
  flex: 197 1 0;
  border-right: 2px solid #7f9bc4;
}

.note label {
  height: 26px;
  padding: 4px 2px;
  color: #24418a;
  background: linear-gradient(#eff5fc, #d9e6f4);
  border-bottom: 1px solid #4f74ad;
}

.note-box {
  flex: 1;
  display: flex;
  min-height: 0;
}

.note textarea {
  flex: 1;
  min-width: 0;
  padding: 1px 2px;
  overflow: hidden;
  resize: none;
  white-space: pre;
  border: 0;
  outline: none;
  background: #efefef;
  color: #000;
  font: 12px/12px "Noto Sans CJK SC", sans-serif;
}

.mini {
  display: flex;
  flex-direction: column;
  align-items: center;
  justify-content: space-between;
  width: 16px;
  padding: 7px 0;
  background: #f1f1f1;
  border-left: 1px solid #dedede;
}

.mini .tri {
  color: #777;
}

.status {
  display: flex;
  align-items: center;
  height: 33px;
  flex: none;
  padding: 0 30px 3px 602px;
  color: #223a6b;
  background: linear-gradient(#eaf3fc, #d9e5f2);
  border-top: 2px solid #4a668f;
  border-bottom: 1px solid #7e8ea0;
}

.status svg {
  margin: 0 8px 0 auto;
}

/* Word window */
.word {
  position: absolute;
  top: 159px;
  left: 0;
  bottom: 2px;
  width: 701px;
  display: flex;
  flex-direction: column;
  background: linear-gradient(90deg, #5a7ba6, #a9cdf2 99%, #cfe5fb);
  border-top: 1px solid #d7e2ef;
  border-right: 1px solid #1c2430;
  border-radius: 0 6px 0 0;
  box-shadow: 0 0 14px 2px rgba(0, 0, 0, 0.8);
}

.title {
  display: flex;
  align-items: flex-start;
  height: 28px;
  flex: none;
  padding-left: 112px;
  border-radius: 0 6px 0 0;
  background: linear-gradient(90deg, #0c1016, #1b222c 16%, #5d6874 26%, #a9b9cc 36%, #b9d9fb 60%, #d4e6f8);
}

.title h1 {
  line-height: 30px;
  white-space: nowrap;
  text-shadow: 0 0 6px #dfe9f5, 0 0 6px #dfe9f5;
}

.winbtns {
  display: flex;
  margin: 0 6px 0 auto;
  border: 1px solid #55616f;
  border-top: 0;
  border-radius: 0 0 5px 5px;
  overflow: hidden;
}

.winbtns button {
  display: flex;
  align-items: center;
  justify-content: center;
  width: 27px;
  height: 18px;
  background: linear-gradient(#dbe5f0 50%, #aabed4 50%);
  border-right: 1px solid #55616f;
}

.winbtns .close {
  width: 47px;
  border: 0;
  background: linear-gradient(#dd9a8c 45%, #c23c22 50%, #cf6a4e);
}

.word-in {
  flex: 1;
  display: flex;
  flex-direction: column;
  min-height: 0;
  margin-right: 7px;
  background: #bfdbff;
  border-top: 1px solid #47617f;
  border-right: 1px solid #47617f;
}

.wtabs {
  display: flex;
  align-items: center;
  gap: 29px;
  height: 28px;
  flex: none;
  padding-right: 4px;
  color: #1f3f7d;
}

.wtabs button:first-child {
  margin-left: -6px;
}

.help {
  margin-left: auto;
}

.wribbon {
  display: flex;
  gap: 4px;
  height: 105px;
  flex: none;
  padding: 0 0 2px;
  background: linear-gradient(#dbe8f6, #c5d9ef 40%, #cfe2f6);
  border-top: 1px solid #9cbce4;
  border-bottom: 1px solid #5f83b3;
}

.wgroup {
  display: flex;
  flex-direction: column;
  height: 101px;
  background: linear-gradient(#d9e6f4, #c7daef 60%, #d6e6f7);
  border: 1px solid #9ebbdc;
  border-radius: 3px;
}

.wgroup footer {
  display: flex;
  justify-content: center;
  position: relative;
  margin-top: auto;
  color: #3c6eb4;
  line-height: 18px;
  background: #c1d8f0;
}

.launch {
  position: absolute;
  right: 4px;
  top: 3px;
  width: 7px;
  height: 7px;
  border: 1px solid #6d8fbd;
  border-right-color: #fff;
  border-bottom-color: #fff;
}

.font {
  width: 114px;
  border-left: 0;
}

.wgroup.font footer {
  justify-content: flex-start;
}

.font footer span {
  margin-left: -11px;
}

.para {
  width: 161px;
}

.styles {
  width: 299px;
  margin-left: 2px;
}

.styles footer {
  padding-right: 18px;
}

.edit {
  width: 43px;
}

.tools {
  display: flex;
  flex-direction: column;
  gap: 4px;
  padding: 4px 4px 0;
}

.tools.across {
  flex-direction: row;
}

.trow {
  display: flex;
  gap: 3px;
}

.font .trow {
  justify-content: flex-end;
  gap: 5px;
}

.seg, .box {
  display: flex;
  flex: none;
  align-items: center;
  justify-content: center;
  height: 22px;
  border: 1px solid #98b5d8;
  border-radius: 3px;
}

.seg button {
  display: flex;
  align-items: center;
  height: 20px;
  padding: 0 3px;
}

.seg .tri, .box .tri {
  color: #4e6e9e;
  margin-left: 2px;
}

.align button {
  width: 23px;
}

.hot {
  background: linear-gradient(#fddca0, #fbb040);
  box-shadow: 0 0 0 1px #c2975b;
}

.push {
  margin-left: auto;
}

.lines {
  width: 32px;
  margin-left: auto;
}

.square {
  width: 24px;
}

.font .box {
  width: 23px;
}

.box.letter, .grow {
  font: bold 16px "Liberation Serif", serif;
}

.framed {
  box-shadow: inset 0 0 0 2px #d3e2f3, inset 0 0 0 3px #333;
}

.shade span {
  padding: 0 2px;
  background: #a9a9a9;
}

.size {
  position: relative;
}

.size select {
  width: 54px;
  height: 22px;
  padding: 0 2px;
  appearance: none;
  font: 12px "Noto Sans CJK SC", sans-serif;
  background: #eef4fb;
  border: 1px solid #c3d6ec;
}

.size .tri {
  position: absolute;
  right: 5px;
  top: 9px;
}

.tiny {
  width: 8px;
}

.script {
  width: 74px;
  margin-left: -12px;
  justify-content: space-between;
  font-weight: bold;
  font-size: 13px;
}

.script s {
  font-size: 10px;
}

.script sub, .script sup, .grow sup {
  align-self: flex-start;
  font-size: 8px;
  line-height: 10px;
  color: #2a5db8;
}

.script sub {
  align-self: flex-end;
}

.grow {
  width: 43px;
}

.grow button {
  padding: 0 1px;
}

.grow .sm {
  font-size: 12px;
}

.gallery {
  display: flex;
  align-items: flex-start;
  flex: none;
  gap: 8px;
  width: 233px;
  height: 59px;
  padding: 4px 0 0 4px;
  background: #d9e8f8;
  border: 1px solid #aec8e6;
}

.card {
  display: flex;
  flex-direction: column;
  flex: none;
  width: 64px;
  height: 50px;
  overflow: hidden;
  background: #fff;
  color: #14286e;
}

.card b {
  height: 33px;
  padding-left: 3px;
  color: #000;
  text-align: left;
  font: bold 20px/34px "Liberation Serif", serif;
}

.card .big {
  font-size: 26px;
  line-height: 28px;
}

.card span {
  line-height: 16px;
}

.gscroll {
  margin: -4px 0 0 -3px;
  width: 14px;
}

.gscroll span {
  display: flex;
  align-items: center;
  justify-content: center;
  height: 19px;
  border: 1px solid #b3cae6;
}

.gscroll .tri {
  color: #5c7dab;
}

.change, .edit button {
  display: flex;
  flex-direction: column;
  align-items: center;
  color: #1f4a8a;
}

.edit button {
  padding-top: 4px;
}

.change {
  flex: 1;
  padding: 1px 4px 0 0;
  white-space: nowrap;
}

.change span, .edit button span {
  margin-top: 5px;
}

.change .tri, .edit .tri {
  margin-top: 6px;
  color: #5c7dab;
}

.edit button .bino {
  display: flex;
  align-items: center;
  justify-content: center;
  width: 30px;
  height: 31px;
  margin-top: 0;
  border: 1px solid #b0c9e6;
  border-radius: 3px;
}

.edge {
  height: 6px;
  flex: none;
  background: #9dbde8;
}

.doc {
  flex: 1;
  display: flex;
  min-height: 0;
  background: linear-gradient(#a4c3ee, #6f97cf 40%, #5279b0 75%, #5c86c4);
}

.sheets {
  flex: 1;
  min-width: 0;
  display: flex;
  flex-direction: column;
  overflow: hidden;
  padding-right: 24px;
}

.sheet {
  position: relative;
  flex: none;
  height: 502px;
  overflow: hidden;
  background: #fff;
  font: 14px/21px "Noto Sans CJK SC", sans-serif;
  border-right: 1px solid #40597d;
  border-bottom: 1px solid #40597d;
}

.sheet :deep(.hw) {
  font-family: "Liberation Mono", monospace;
  font-size: 12px;
}

.sheet p, .sheet li {
  height: 21px;
  white-space: nowrap;
}

.sheet p:first-child {
  margin-top: -14px;
}

.cut {
  margin-left: -5px;
}

.sheet .more {
  margin-left: -10px;
}

.ret {
  color: #888;
  font: 11px/11px "DejaVu Sans", sans-serif;
}

.roman {
  font-family: "Liberation Serif", serif;
  line-height: 1;
  white-space: pre;
}

.inks {
  width: 236px;
  margin: 10px 0 6px;
}

.inks td {
  height: 22px;
  padding: 0 0 0 1px;
  line-height: 20px;
  white-space: nowrap;
  border: 1px solid #000;
}

.inks .color {
  width: 35px;
  padding-right: 6px;
  border-left: 0;
}

.color div {
  display: flex;
  align-items: center;
  justify-content: flex-end;
}

.inks .brand {
  width: 181px;
}

.inks .end {
  border: 0;
}

.sheet ul {
  padding-top: 2px;
}

.sheet li {
  height: 26px;
  line-height: 26px;
  padding-left: 48px;
  background: linear-gradient(#222, #222) 0 center / 1px 7px no-repeat;
}

.tail {
  padding-left: 19px;
}

.marker {
  position: absolute;
  left: 34px;
  top: 265px;
  width: 424px;
  height: 60px;
  border: 3px solid #ea14e6;
  box-shadow: 1px 2px 4px rgba(0, 0, 0, 0.6), inset 1px 2px 4px rgba(0, 0, 0, 0.4);
}

.cursor {
  position: absolute;
  left: 302px;
  top: 298px;
  width: 1px;
  height: 17px;
  background: #000;
}

.crop {
  position: absolute;
  right: 26px;
  width: 25px;
  height: 24px;
  border-left: 1px solid #aaa;
}

.crop.bottom {
  bottom: 28px;
  border-top: 1px solid #aaa;
}

.crop.top {
  top: 29px;
  border-bottom: 1px solid #aaa;
}

.next {
  margin-top: 14px;
  padding-top: 57px;
  border-top: 1px solid #40597d;
}

.wscroll {
  display: flex;
  flex-direction: column;
  width: 16px;
}

.track {
  flex: 1;
  display: flex;
  flex-direction: column;
  align-items: center;
  padding: 5px 0;
  background: #7396c8;
  border: 1px solid #5e82b8;
}

.track b {
  width: 14px;
  height: 60px;
  margin: 174px 0 auto;
  background: repeating-linear-gradient(#6a7d99 0 1px, transparent 1px 3px) center / 8px 9px no-repeat, linear-gradient(90deg, #f2f6fc, #bccde6);
  border: 1px solid #50698f;
}

/* on top of everything */
.pointer {
  position: absolute;
  left: 1280px;
  top: 455px;
  fill: none;
  pointer-events: none;
}

.ball {
  position: absolute;
  right: -27px;
  top: 812px;
  width: 46px;
  height: 46px;
  padding-left: 3px;
  text-align: left;
  color: #fff;
  font-weight: bold;
  font-size: 12px;
  background: radial-gradient(circle at 50% 30%, #6fdc7c, #2fae48);
  border: 2px solid #f0f4f0;
  border-radius: 50%;
  box-shadow: 0 0 3px #333;
}

.taskbar {
  position: absolute;
  left: 0;
  right: 0;
  bottom: 0;
  height: 2px;
  background: #6d7278;
}
</style>
